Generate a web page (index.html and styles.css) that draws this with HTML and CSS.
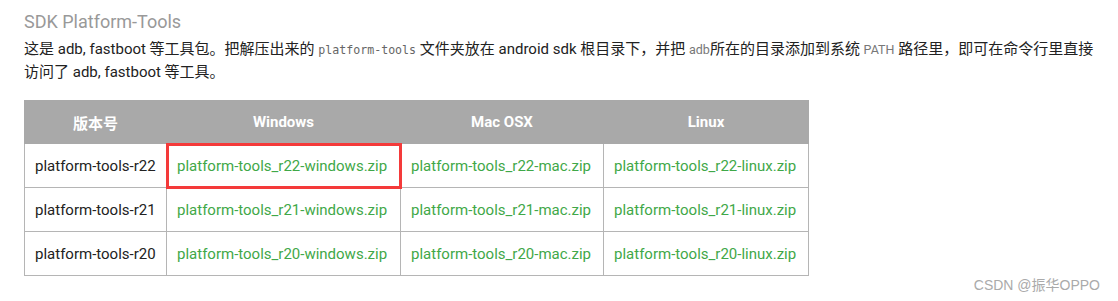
FILE: index.html
```html
<!DOCTYPE html>
<html lang="zh">
<head>
<meta charset="utf-8">
<link rel="stylesheet" href="styles.css">
</head>
<body>
<div class="page">
  <h2 class="title">SDK Platform-Tools</h2>
  <p class="desc">这是 adb, fastboot 等工具包。把解压出来的 <code class="mono">platform-tools</code> 文件夹放在 android sdk 根目录下，并把 <code class="small">adb</code>所在的目录添加到系统 <code class="small">PATH</code> 路径里，即可在命令行里直接<br>访问了 adb, fastboot 等工具。</p>
  <table class="dl">
    <thead>
      <tr><th class="c1">版本号</th><th class="c2">Windows</th><th class="c3">Mac OSX</th><th class="c4">Linux</th></tr>
    </thead>
    <tbody>
      <tr><td>platform-tools-r22</td><td class="hl"><a>platform-tools_r22-windows.zip</a></td><td><a>platform-tools_r22-mac.zip</a></td><td><a>platform-tools_r22-linux.zip</a></td></tr>
      <tr><td>platform-tools-r21</td><td><a>platform-tools_r21-windows.zip</a></td><td><a>platform-tools_r21-mac.zip</a></td><td><a>platform-tools_r21-linux.zip</a></td></tr>
      <tr><td>platform-tools-r20</td><td><a>platform-tools_r20-windows.zip</a></td><td><a>platform-tools_r20-mac.zip</a></td><td><a>platform-tools_r20-linux.zip</a></td></tr>
    </tbody>
  </table>
  <div class="mark">CSDN @振华OPPO</div>
</div>
</body>
</html>
```
FILE: styles.css
```css
html, body { margin: 0; padding: 0; background: #fff; }
body {
  font-family: Roboto, "Noto Sans CJK SC", sans-serif;
  color: #333;
  width: 1118px;
  height: 301px;
  overflow: hidden;
}
.page { position: relative; height: 301px; padding: 0 0 0 24px; box-sizing: border-box; }
.title {
  margin: 0;
  padding-top: 10px;
  font-size: 18px;
  font-weight: 400;
  line-height: 24px;
  color: #999;
}
.desc {
  margin: 4px 0 0;
  width: 1090px;
  font-size: 15px;
  line-height: 23px;
  color: #222;
}
.mono {
  font-family: "DejaVu Sans Mono", monospace;
  font-size: 11.6px;
  line-height: 1;
  color: #666;
}
.small {
  font-family: Roboto, sans-serif;
  font-size: 12.5px;
  line-height: 1;
  color: #777;
}
.dl {
  margin-top: 16px;
  border-collapse: collapse;
  border: 1px solid #b5b5b5;
  font-size: 15px;
}
.dl th {
  background: #a9a9a9;
  color: #fff;
  font-weight: 700;
  height: 42px;
  padding: 0 10px;
  border: 1px solid #a9a9a9;
  font-size: 15px;
}
.dl .c1 { width: 121px; }
.dl .c2 { width: 213px; }
.dl .c3 { width: 182px; }
.dl .c4 { width: 184px; }
.dl td {
  height: 43px;
  padding: 0 10px;
  border: 1px solid #b5b5b5;
  color: #222;
  white-space: nowrap;
}
.dl a { color: #3fa848; text-decoration: none; }
.dl td.hl { outline: 3px solid #f43a3a; outline-offset: -2px; }
.mark {
  position: absolute;
  right: 18px;
  bottom: 7px;
  font-family: "Liberation Sans", "Noto Sans CJK SC", sans-serif;
  font-size: 14px;
  color: #aaa;
}
```
